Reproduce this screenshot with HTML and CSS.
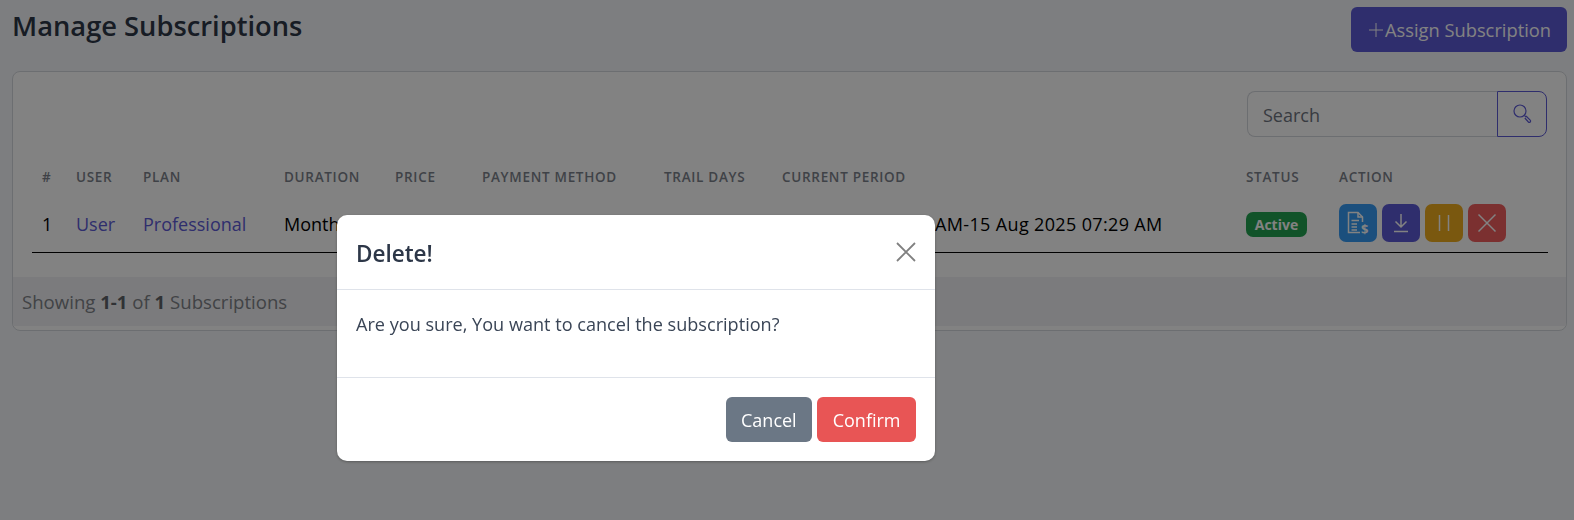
FILE: index.html
```html
<!DOCTYPE html>
<html>
<head>
    <title>Manage Subscriptions</title>
    <link rel="stylesheet" href="styles.css">
</head>
<body>
    <div class="container">
        <div class="header">
            <h1>Manage Subscriptions</h1>
            <a href="#" class="assign-btn">
                <svg class="plus-icon" viewBox="0 0 16 16"><path d="M8 1v14M1 8h14"/></svg>Assign Subscription
            </a>
        </div>
        <div class="card">
            <div class="card-body">
                <div class="search-row">
                    <input class="search-input" type="text" placeholder="Search">
                    <button class="search-btn">
                        <svg viewBox="0 0 20 20"><circle cx="8" cy="8" r="6"/><path d="M12.5 12.5l1.6 1.600"/><path d="M14 13l4.200 4.200a1.200 1.200 0 0 1-1.800 1.800L12.800 15"/></svg>
                    </button>
                </div>
                <table class="sub-table">
                    <thead>
                        <tr>
                            <th class="col-num">#</th>
                            <th class="col-user">User</th>
                            <th class="col-plan">Plan</th>
                            <th class="col-duration">Duration</th>
                            <th class="col-price">Price</th>
                            <th class="col-method">Payment Method</th>
                            <th class="col-trail">Trail Days</th>
                            <th class="col-period">Current Period</th>
                            <th class="col-status">Status</th>
                            <th class="col-action">Action</th>
                        </tr>
                    </thead>
                    <tbody>
                        <tr>
                            <td>1</td>
                            <td><a href="#">User</a></td>
                            <td><a href="#">Professional</a></td>
                            <td>Monthly</td>
                            <td>$29</td>
                            <td>Stripe</td>
                            <td>0</td>
                            <td class="period">15 Jul 2025 07:29 AM-15 Aug 2025 07:29 AM</td>
                            <td><span class="badge">Active</span></td>
                            <td>
                                <div class="actions">
                                    <a href="#" class="act act-blue">
                                        <svg viewBox="-2 -2 28 28"><path d="M16.500 11V6L12 1.500H2.500V21.500H14"/><path d="M12 1.500V6h4.500"/><path d="M5.500 9.500H13M5.500 13H11M5.500 16H11M5.500 19H11"/><text x="15" y="22.500" class="dollar">$</text></svg>
                                    </a>
                                    <a href="#" class="act act-indigo">
                                        <svg viewBox="0 0 24 24"><path d="M12 3v13M6.500 10.500L12 16l5.500-5.500M5 20.500h14"/></svg>
                                    </a>
                                    <a href="#" class="act act-yellow">
                                        <svg viewBox="0 0 24 24"><path d="M7.500 4v16M16.500 4v16"/></svg>
                                    </a>
                                    <a href="#" class="act act-red">
                                        <svg viewBox="0 0 24 24"><path d="M3.500 3.500l17 17M20.500 3.500l-17 17"/></svg>
                                    </a>
                                </div>
                            </td>
                        </tr>
                    </tbody>
                </table>
            </div>
            <div class="card-footer">Showing <strong>1-1</strong> of <strong>1</strong> Subscriptions</div>
        </div>
    </div>

    <div class="backdrop"></div>
    <div class="modal-wrap">
        <div class="modal">
            <div class="modal-header">
                <h2>Delete!</h2>
                <button class="close-btn">
                    <svg viewBox="0 0 20 20"><path d="M1 1l18 18M19 1L1 19"/></svg>
                </button>
            </div>
            <div class="modal-body">Are you sure, You want to cancel the subscription?</div>
            <div class="modal-footer">
                <button class="btn btn-cancel">Cancel</button>
                <button class="btn btn-confirm">Confirm</button>
            </div>
        </div>
    </div>
</body>
</html>
```

FILE: styles.css
```css
* {
    box-sizing: border-box;
}
html, body {
    height: 100%;
}
body {
    margin: 0;
    font-family: "Open Sans", "Noto Sans", sans-serif;
    font-size: 18px;
    color: #2d3748;
    background-color: #f6f8fb;
    overflow: hidden;
}
.container {
    padding: 7px 7px 0 12px;
}
.header {
    display: flex;
    justify-content: space-between;
    align-items: flex-start;
    height: 64px;
}
h1 {
    margin: 2px 0 0 0;
    font-size: 27.300px;
    line-height: 34px;
    font-weight: 600;
    color: #2d3748;
}
.assign-btn {
    display: flex;
    align-items: center;
    height: 45px;
    padding: 0 16px 0 17px;
    background: #5d5ad6;
    color: #fff;
    border-radius: 6px;
    font-size: 18.300px;
    text-decoration: none;
}
.plus-icon {
    width: 16px;
    height: 16px;
    margin-right: 1px;
    fill: none;
    stroke: #fff;
    stroke-width: 1;
}
.card {
    background: #fff;
    border: 1px solid #d5d8de;
    border-radius: 8px;
    overflow: hidden;
    height: 260px;
}
.card-body {
    padding: 19px;
    height: 205px;
}
.search-row {
    display: flex;
    justify-content: flex-end;
    height: 46px;
}
.search-input {
    width: 250px;
    height: 46px;
    padding: 2px 15px 0 15px;
    border: 1px solid #d5d8de;
    border-right: none;
    border-radius: 8px 0 0 8px;
    font-family: inherit;
    font-size: 18px;
    color: #2d3748;
    outline: none;
}
.search-input::placeholder {
    color: #6f7580;
}
.search-btn {
    width: 50px;
    height: 46px;
    padding: 0;
    display: flex;
    align-items: center;
    justify-content: center;
    background: #fff;
    border: 1px solid #5d5ad6;
    border-radius: 0 8px 8px 0;
}
.search-btn svg {
    width: 20px;
    height: 20px;
    margin-top: -2px;
    fill: none;
    stroke: #5d5ad6;
    stroke-width: 1.200;
}
.sub-table {
    width: 1516px;
    margin-top: 21px;
    border-collapse: collapse;
    table-layout: fixed;
}
.sub-table th {
    padding: 2px 10px 0 10px;
    height: 36px;
    font-size: 13.500px;
    font-weight: 600;
    letter-spacing: 0.7px;
    text-align: left;
    text-transform: uppercase;
    color: #7d828c;
    white-space: nowrap;
}
.sub-table td {
    padding: 3px 10px 0 10px;
    height: 58px;
    color: #000;
    white-space: nowrap;
    border-bottom: 1px solid #000;
}
.sub-table td.period {
    letter-spacing: 0.35px;
}
.sub-table a {
    color: #5d5ad6;
    text-decoration: none;
}
.col-num { width: 34px; }
.col-user { width: 67px; }
.col-plan { width: 141px; }
.col-duration { width: 111px; }
.col-price { width: 87px; }
.col-method { width: 182px; }
.col-trail { width: 118px; }
.col-period { width: 464px; }
.col-status { width: 93px; }
.col-action { width: 219px; }
.badge {
    display: inline-block;
    width: 61px;
    height: 25px;
    margin-top: -2px;
    line-height: 25px;
    text-align: center;
    background: #22a352;
    color: #fff;
    font-size: 14px;
    font-weight: 700;
    border-radius: 7px;
    vertical-align: middle;
}
.actions {
    display: flex;
    gap: 5px;
    margin-top: -2px;
}
.act {
    display: flex;
    align-items: center;
    justify-content: center;
    width: 38px;
    height: 38px;
    border-radius: 7px;
}
.act svg {
    width: 24px;
    height: 24px;
    fill: none;
    stroke: #fff;
    stroke-width: 1.500;
}
.act-blue svg {
    width: 28px;
    height: 28px;
}
.act svg .dollar {
    fill: #fff;
    stroke: none;
    font-size: 13px;
    font-weight: 700;
}
.act-blue { background: #369cf6; }
.act-indigo { background: #5d5ad6; }
.act-yellow { background: #f0ad1e; }
.act-red { background: #f15e5e; }
.card-footer {
    height: 49px;
    line-height: 49px;
    padding: 0 9px;
    background: #f1f2f5;
    color: #808389;
    font-size: 18.600px;
}
.card-footer strong {
    font-weight: 700;
    color: #5f6268;
}
.backdrop {
    position: fixed;
    top: 0;
    left: 0;
    right: 0;
    bottom: 0;
    background: rgba(0,0,0,0.49);
}
.modal-wrap {
    position: fixed;
    top: 215px;
    left: 337px;
}
.modal {
    width: 598px;
    height: 246px;
    background: #fff;
    border-radius: 10px;
    display: flex;
    flex-direction: column;
    box-shadow: 0 1px 3px rgba(0,0,0,0.3);
}
.modal-header {
    height: 75px;
    padding: 0 19px;
    display: flex;
    justify-content: space-between;
    align-items: center;
    border-bottom: 1px solid #dfe3ea;
}
.modal-header h2 {
    margin: 2px 0 0 0;
    font-size: 22.500px;
    font-weight: 600;
    color: #2d3748;
}
.close-btn {
    width: 20px;
    height: 20px;
    padding: 0;
    border: none;
    background: none;
    display: flex;
}
.close-btn svg {
    width: 20px;
    height: 20px;
    fill: none;
    stroke: #808080;
    stroke-width: 1.800;
}
.modal-body {
    flex: 1;
    padding: 22px 19px 0 19px;
    color: #3a4556;
    font-size: 18.100px;
}
.modal-footer {
    height: 84px;
    padding: 19px 19px 0 0;
    display: flex;
    justify-content: flex-end;
    gap: 5px;
    border-top: 1px solid #dfe3ea;
}
.btn {
    height: 45px;
    padding: 0 15.500px;
    border: none;
    border-radius: 6px;
    font-family: inherit;
    font-size: 18px;
    color: #fff;
}
.btn-cancel { background: #6b7785; }
.btn-confirm { background: #e85555; }
```
